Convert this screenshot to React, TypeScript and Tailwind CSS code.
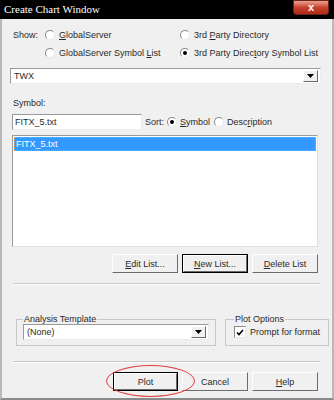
import React from 'react';

function Radio({ checked = false }: { checked?: boolean }) {
  return (
    <span className="flex h-[10px] w-[10px] shrink-0 items-center justify-center rounded-full border border-t-[#8a8a8a] border-l-[#8a8a8a] border-b-[#e8e8e8] border-r-[#e8e8e8] bg-white">
      {checked && <span className="h-[4px] w-[4px] rounded-full bg-black" />}
    </span>
  );
}

function Btn({ children, primary = false, w = 'w-[66px]' }: { children: React.ReactNode; primary?: boolean; w?: string }) {
  return (
    <div className={`${w} h-[19px] ${primary ? 'border border-black' : ''}`}>
      <div className="flex h-full w-full items-center justify-center border border-t-white border-l-white border-b-[#6b6b6b] border-r-[#6b6b6b] bg-[#f0f0f0]">
        {children}
      </div>
    </div>
  );
}

function DropArrow() {
  return (
    <div className="flex h-[12px] w-[15px] items-center justify-center border border-t-white border-l-white border-b-[#6b6b6b] border-r-[#6b6b6b] bg-[#f0f0f0]">
      <svg width="7" height="4" viewBox="0 0 7 4">
        <path d="M0 0h7L3.5 4z" fill="#000" />
      </svg>
    </div>
  );
}

function Combo({ value, className }: { value: string; className: string }) {
  return (
    <div className={`${className} flex items-center border border-t-[#9a9a9a] border-l-[#9a9a9a] border-b-[#ececec] border-r-[#ececec] bg-white pl-[3px] pr-[2px]`}>
      <span className="flex-1">{value}</span>
      <DropArrow />
    </div>
  );
}

export default function App() {
  return (
    <div
      className="relative h-[400px] w-[334px] overflow-hidden bg-[#f0f0f0] text-[9px] leading-[12px] text-[#2a2a2a]"
      style={{ fontFamily: '"Liberation Sans", Arial, sans-serif' }}
    >
      {/* title bar */}
      <div className="flex h-[19px] items-start bg-black">
        <span
          className="pl-[4px] pt-[3px] text-[11px] leading-[13px] text-white"
          style={{ fontFamily: '"Liberation Serif", "Times New Roman", serif' }}
        >
          Create Chart Window
        </span>
        <div className="ml-auto mr-[5px] flex h-[15px] w-[36px] items-center justify-center rounded-b-[3px] border border-[#6a2418] bg-gradient-to-b from-[#e8a090] via-[#c8402e] to-[#b02a18]">
          <span className="text-[11px] font-bold leading-none text-white">x</span>
        </div>
      </div>

      {/* body */}
      <div className="flex h-[381px] flex-col border-x-2 border-b-2 border-x-[#b8b8b8] border-b-[#8a8a8a] px-[8px]">
        {/* show */}
        <div className="mt-[10px] flex">
          <span className="w-[35px] pl-[3px]">Show:</span>
          <div className="flex w-[135px] flex-col gap-[6px]">
            <div className="flex h-[12px] items-center gap-[4px]">
              <Radio /> <span><u>G</u>lobalServer</span>
            </div>
            <div className="flex h-[12px] items-center gap-[4px]">
              <Radio /> <span>GlobalServer Symbol <u>L</u>ist</span>
            </div>
          </div>
          <div className="flex flex-col gap-[6px]">
            <div className="flex h-[12px] items-center gap-[4px]">
              <Radio /> <span>3rd <u>P</u>arty Directory</span>
            </div>
            <div className="flex h-[12px] items-center gap-[4px]">
              <Radio checked /> <span>3rd Party Direc<u>t</u>ory Symbol List</span>
            </div>
          </div>
        </div>

        <Combo value="TWX" className="mr-[3px] mt-[9px] h-[16px]" />

        <div className="mt-[13px] pl-[3px]">Symbol:</div>
        <div className="mt-[5px] flex items-center">
          <div className="ml-[2px] flex h-[16px] w-[130px] items-center border border-t-[#9a9a9a] border-l-[#9a9a9a] border-b-[#ececec] border-r-[#ececec] bg-white pl-[2px]">
            FITX_5.txt
          </div>
          <span className="ml-[3px]">Sort:</span>
          <span className="ml-[3px]"><Radio checked /></span>
          <span className="ml-[3px]"><u>S</u>ymbol</span>
          <span className="ml-[4px]"><Radio /></span>
          <span className="ml-[3px]">Desc<u>r</u>iption</span>
        </div>

        <div className="ml-[2px] mr-[6px] mt-[5px] h-[112px] border border-t-[#9a9a9a] border-l-[#9a9a9a] border-b-[#e0e0e0] border-r-[#e0e0e0] bg-white p-[1px]">
          <div className="h-[14px] border border-dotted border-[#e0a060] bg-[#3399ff] pl-[1px] text-white">FITX_5.txt</div>
        </div>

        <div className="mr-[6px] mt-[7px] flex justify-end gap-[4px]">
          <Btn><span><u>E</u>dit List...</span></Btn>
          <Btn primary><span><u>N</u>ew List...</span></Btn>
          <Btn><span><u>D</u>elete List</span></Btn>
        </div>

        <div className="ml-[3px] mr-[4px] mt-[10px] border-t border-b border-t-[#c8c8c8] border-b-white" />

        <div className="mt-[29px] flex gap-[9px]">
          <fieldset className="ml-[6px] h-[32px] w-[204px] border border-[#c8c8c8] px-[6px]">
            <legend className="-mb-[1px] px-[1px] leading-[10px]">Analysis Template</legend>
            <Combo value="(None)" className="mt-[1px] h-[16px] w-[186px]" />
          </fieldset>
          <fieldset className="h-[32px] w-[98px] border border-[#c8c8c8] px-[8px]">
            <legend className="-mb-[1px] px-[1px] leading-[10px]">Plot Options</legend>
            <div className="mt-[3px] flex items-center gap-[4px]">
              <span className="flex h-[12px] w-[12px] items-center justify-center border border-t-[#8a8a8a] border-l-[#8a8a8a] border-b-[#e8e8e8] border-r-[#e8e8e8] bg-white">
                <svg width="8" height="7" viewBox="0 0 8 7"><path d="M1 3.5l2 2L7 1" stroke="#000" strokeWidth="1.6" fill="none" /></svg>
              </span>
              <span className="whitespace-nowrap">Prompt for format</span>
            </div>
          </fieldset>
        </div>

        <div className="ml-[3px] mr-[4px] mt-[15px] border-t border-b border-t-[#c8c8c8] border-b-white" />

        <div className="relative mr-[6px] mt-[9px] flex justify-end gap-[4px]">
          <Btn primary w="w-[65px]">Plot</Btn>
          <Btn>Cancel</Btn>
          <Btn><span><u>H</u>elp</span></Btn>
          <div className="pointer-events-none absolute left-[96px] top-[-7px] h-[32px] w-[89px] rounded-[50%] border border-[#e04040]" />
        </div>
      </div>
    </div>
  );
}
